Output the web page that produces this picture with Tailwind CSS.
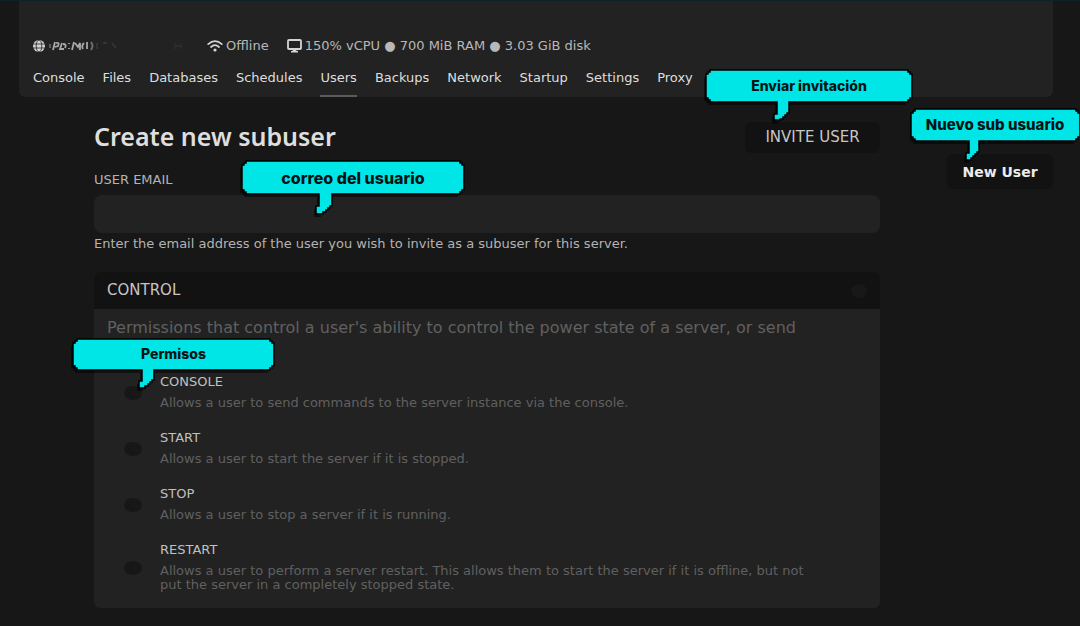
<!DOCTYPE html>
<html lang="en">
<head>
<meta charset="utf-8">
<meta name="viewport" content="width=device-width, initial-scale=1">
<title>Create new subuser</title>
<script src="https://cdn.jsdelivr.net/npm/@tailwindcss/browser@4"></script>
</head>
<body class="min-h-screen border-t border-[#0d2224] bg-[#171717] font-['DejaVu_Sans',sans-serif] text-[#cfcfcf]">
<header class="mr-[27px] ml-[19px] rounded-b-md bg-[#222222] px-[14px] pt-[37px]">
  <div class="flex h-4 items-center text-[13px] leading-4 text-[#b8b8b8]">
    <svg class="h-3 w-3" viewBox="0 0 12 12" aria-hidden="true"><circle cx="6" cy="6" r="6" fill="#d4d4d4"/><g fill="none" stroke="#222" stroke-width="0.8"><ellipse cx="6" cy="6" rx="2.8" ry="6"/><path d="M0 4h12M0 8h12"/></g></svg>
    <svg class="mr-2 ml-1 h-4 w-[150px]" viewBox="0 0 150 16" aria-hidden="true"><g fill="none" stroke="#a8a8a8" stroke-width="1.8" style="filter:blur(.6px)"><path d="M1 6v4" opacity=".5"/><path d="M6 4l-2 8M7 5q4-1 2 3l-3 1M13 5l-2 6h4M14 6q4 0 2 4M20 5v1M20 10v1M25 4l-2 8M26 5l3 4 2-4v7M35 5q-3 3-1 6M38 4v7"/><path d="M42 4q3 4 0 8" opacity=".6"/><path d="M48 5v6M54 5h4M63 5l4 5" opacity=".15"/><path d="M126 5v6M126 8h6M132 5v6" opacity=".08"/></g></svg>
    <svg class="h-3 w-4" viewBox="0 0 16 12" aria-hidden="true"><g fill="none" stroke="#d4d4d4" stroke-width="1.7" stroke-linecap="round"><path d="M1.2 4.2Q8-1.9 14.8 4.2M4 7q4-3.600 8 0"/></g><circle cx="8" cy="10" r="1.600" fill="#d4d4d4"/></svg>
    <span class="ml-[3px]">Offline</span>
    <svg class="ml-[18px] h-[14px] w-[15px]" viewBox="0 0 15 14" aria-hidden="true"><rect x="1" y="1" width="13" height="9" rx="1" fill="none" stroke="#d4d4d4" stroke-width="1.8"/><path d="M6 10h3l.5 2H11v1.500H4V12h1.500z" fill="#d4d4d4"/></svg>
    <span class="ml-[3px]">150% vCPU ● 700 MiB RAM ● 3.03 GiB disk</span>
  </div>
  <nav class="mt-4 flex gap-[18px] text-[13px] leading-4 text-[#dedede]">
    <a href="#" class="h-[27px]">Console</a>
    <a href="#" class="h-[27px]">Files</a>
    <a href="#" class="h-[27px]">Databases</a>
    <a href="#" class="h-[27px]">Schedules</a>
    <a href="#" class="h-[27px] border-b-2 border-[#5a5a5a]" aria-current="page">Users</a>
    <a href="#" class="h-[27px]">Backups</a>
    <a href="#" class="h-[27px]">Network</a>
    <a href="#" class="h-[27px]">Startup</a>
    <a href="#" class="h-[27px]">Settings</a>
    <a href="#" class="h-[27px]">Proxy</a>
  </nav>
</header>

<main class="mr-[27px] ml-[94px] flex items-start gap-[67px] pt-[25px] pb-[17px]">
  <form class="min-w-0 flex-1">
    <div class="flex items-start justify-between">
      <h1 class="font-['Noto_Sans',sans-serif] text-[25px] leading-7 font-semibold text-[#dedede]">Create new subuser</h1>
      <div class="relative">
        <button type="button" class="block h-[31px] w-[135px] rounded-md bg-[#121212] text-[15px] text-[#c6c6c6]">INVITE USER</button>
        <div class="absolute -top-[53px] -left-[40px] h-[54px] w-[208px]">
          <svg class="absolute inset-0 overflow-visible" width="208" height="54" aria-hidden="true"><path transform="translate(-2 3)" fill="#000" fill-opacity=".5" d="M5 1H203v2h2v2h2V29h-2v2h-2v2H84V44h-2v2h-2v2h-2v2h-3v2h-6V45h3V33H5v-2h-2v-2h-2V5h2V3h2z"/><path fill="#00e6e6" stroke="#000" stroke-width="1.5" d="M5 1H203v2h2v2h2V29h-2v2h-2v2H84V44h-2v2h-2v2h-2v2h-3v1h-6V45h3V33H5v-2h-2v-2h-2V5h2V3h2z"/></svg>
          <p class="relative text-center font-['Inter',sans-serif] text-sm leading-[34px] font-extrabold text-[#031414]">Enviar invitación</p>
        </div>
      </div>
    </div>
    <div class="relative mt-[19px]">
      <label for="email" class="block text-[13px] leading-4 text-[#b3b3b3]">USER EMAIL</label>
      <input id="email" type="email" aria-describedby="hint" class="mt-[7px] block h-[38px] w-full rounded-lg bg-[#222222] px-3 text-sm outline-none">
      <p id="hint" class="mt-[3px] text-[13px] leading-4 text-[#b3b3b3]">Enter the email address of the user you wish to invite as a subuser for this server.</p>
      <div class="absolute -top-3 left-[147px] h-[56px] w-[224px]">
        <svg class="absolute inset-0 overflow-visible" width="224" height="56" aria-hidden="true"><path transform="translate(-2 3)" fill="#000" fill-opacity=".5" d="M5 1H219v2h2v2h2V30h-2v2h-2v2H91V46h-2v2h-2v2h-2v2h-3v2h-7V46h3V34H5v-2h-2v-2h-2V5h2V3h2z"/><path fill="#00e6e6" stroke="#000" stroke-width="1.5" d="M5 1H219v2h2v2h2V30h-2v2h-2v2H91V46h-2v2h-2v2h-2v2h-3v2h-7V46h3V34H5v-2h-2v-2h-2V5h2V3h2z"/></svg>
        <p class="relative text-center font-['Inter',sans-serif] text-base leading-[36px] font-extrabold text-[#031414]">correo del usuario</p>
      </div>
    </div>
    <section class="relative mt-5 rounded-md bg-[#222222] pb-4">
      <div class="flex h-[37px] items-center justify-between rounded-t-md bg-[#121212] px-[13px]">
        <h2 class="text-[15px] text-[#c6c6c6]">CONTROL</h2>
        <input type="checkbox" aria-label="All control permissions" class="h-[14px] w-4 appearance-none rounded-[50%] bg-[#181818]">
      </div>
      <p class="mt-[10px] px-[13px] text-base leading-[18px] text-[#606060]">Permissions that control a user's ability to control the power state of a server, or send</p>
      <div class="mt-[35px] flex flex-col gap-[18px] pr-16 pl-[30px] text-[13px] text-[#606060]">
        <label class="flex items-center gap-[18px]"><input type="checkbox" class="mt-1 h-[14px] w-[18px] shrink-0 appearance-none rounded-[50%] bg-[#171717]"><span class="flex flex-col gap-1"><span class="leading-5 text-[#c0c0c0]">CONSOLE</span><span class="leading-[14px]">Allows a user to send commands to the server instance via the console.</span></span></label>
        <label class="flex items-center gap-[18px]"><input type="checkbox" class="mt-1 h-[14px] w-[18px] shrink-0 appearance-none rounded-[50%] bg-[#171717]"><span class="flex flex-col gap-1"><span class="leading-5 text-[#c0c0c0]">START</span><span class="leading-[14px]">Allows a user to start the server if it is stopped.</span></span></label>
        <label class="flex items-center gap-[18px]"><input type="checkbox" class="mt-1 h-[14px] w-[18px] shrink-0 appearance-none rounded-[50%] bg-[#171717]"><span class="flex flex-col gap-1"><span class="leading-5 text-[#c0c0c0]">STOP</span><span class="leading-[14px]">Allows a user to stop a server if it is running.</span></span></label>
        <label class="flex items-center gap-[18px]"><input type="checkbox" class="mt-1 h-[14px] w-[18px] shrink-0 appearance-none rounded-[50%] bg-[#171717]"><span class="flex flex-col gap-1"><span class="leading-5 text-[#c0c0c0]">RESTART</span><span class="leading-[14px]">Allows a user to perform a server restart. This allows them to start the server if it is offline, but not put the server in a completely stopped state.</span></span></label>
      </div>
      <div class="absolute top-[66px] -left-[22px] h-[52px] w-[203px]">
        <svg class="absolute inset-0 overflow-visible" width="203" height="52" aria-hidden="true"><path transform="translate(-2 3)" fill="#000" fill-opacity=".5" d="M5 1H198v2h2v2h2V28h-2v2h-2v2H82V42h-2v2h-2v2h-2v2h-3v2h-6V43h3V32H5v-2h-2v-2h-2V5h2V3h2z"/><path fill="#00e6e6" stroke="#000" stroke-width="1.5" d="M5 1H198v2h2v2h2V28h-2v2h-2v2H82V42h-2v2h-2v2h-2v2h-3v2h-6V43h3V32H5v-2h-2v-2h-2V5h2V3h2z"/></svg>
        <p class="relative text-center font-['Inter',sans-serif] text-sm leading-8 font-extrabold text-[#031414]">Permisos</p>
      </div>
    </section>
  </form>
  <div class="relative mt-8">
    <button type="button" class="block h-[35px] w-[106px] rounded-md bg-[#121212] text-sm font-bold text-[#ececec]">New User</button>
    <div class="absolute -top-[46px] -left-[37px] h-[54px] w-[170px]">
      <svg class="absolute inset-0" width="170" height="56" aria-hidden="true"><path transform="translate(-2 3)" fill="#000" fill-opacity=".5" d="M5 1H166v2h2v2h2V29h-2v2h-2v2H69V44h-2v2h-2v2h-2v2h-2v2h-5V45h3V33H5v-2h-2v-2h-2V5h2V3h2z"/><path fill="#00e6e6" stroke="#000" stroke-width="1.5" d="M5 1H166v2h2v2h2V29h-2v2h-2v2H69V44h-2v2h-2v2h-2v2h-2v2h-5V45h3V33H5v-2h-2v-2h-2V5h2V3h2z"/></svg>
      <p class="relative text-center font-['Inter',sans-serif] text-[15px] leading-[34px] font-extrabold text-[#031414]">Nuevo sub usuario</p>
    </div>
  </div>
</main>
</body>
</html>
